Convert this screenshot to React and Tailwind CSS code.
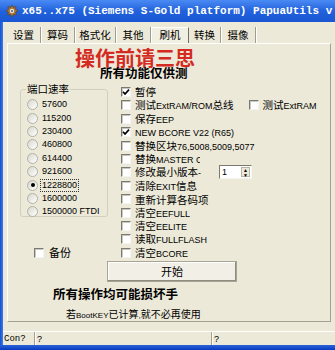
import React from "react";

const CJK_RE = /([\u2E80-\u9FFF\uFF00-\uFFEF]+)/;

// splits a label into CJK / latin runs so each gets its own size
const Mixed = ({ text, cjk = "text-[10.5px]", lat = "text-[9px]" }) =>
  text
    .split(CJK_RE)
    .filter(Boolean)
    .map((p, i) =>
      CJK_RE.test(p) ? (
        <span key={i} className={cjk}>
          {p}
        </span>
      ) : (
        <span key={i} className={lat}>
          {p}
        </span>
      )
    );

const Check = ({ on }) => (
  <span className="w-[10px] h-[10px] shrink-0 bg-white border border-t-[#7A7A72] border-l-[#7A7A72] border-r-[#F4F4F0] border-b-[#F4F4F0] shadow-[inset_1px_1px_0_#C8C8C0] flex items-center justify-center">
    {on && (
      <svg width="8" height="8" viewBox="0 0 8 8">
        <path d="M1 3.8 L3 6 L7 1.6" stroke="#000" strokeWidth="1.7" fill="none" />
      </svg>
    )}
  </span>
);

const Radio = ({ on }) => (
  <span className="w-[11px] h-[11px] shrink-0 rounded-full border border-[#B2B2A8] bg-linear-to-br from-[#D8D8CE] to-white flex items-center justify-center">
    {on && <span className="w-[4px] h-[4px] rounded-full bg-black" />}
  </span>
);

const rates = ["57600", "115200", "230400", "460800", "614400", "921600", "1228800", "1600000", "1500000 FTDI"];

const options = [
  { label: "暂停", on: true },
  { label: "测试ExtRAM/ROM总线", extra: "测试ExtRAM" },
  { label: "保存EEP" },
  { label: "NEW BCORE V22 (R65)", on: true },
  { label: "替换区块76,5008,5009,5077" },
  { label: "替换MASTER CCP", clip: true },
  { label: "修改最小版本-", spin: true },
  { label: "清除EXIT信息" },
  { label: "重新计算各码项" },
  { label: "清空EEFULL" },
  { label: "清空EELITE" },
  { label: "读取FULLFLASH" },
  { label: "清空BCORE" },
];

const tabs = [
  { label: "设置", w: "w-[34px]" },
  { label: "算码", w: "w-[34px]" },
  { label: "格式化", w: "w-[41px]" },
  { label: "其他", w: "w-[35px]" },
  { label: "刷机", w: "w-[38px]", active: true },
  { label: "转换", w: "w-[32px]" },
  { label: "摄像", w: "w-[35px]" },
];

export default function App() {
  return (
    <div className="w-[335px] h-[350px] overflow-hidden bg-[#ECE9D8] flex flex-col font-['Liberation_Sans','Noto_Sans_CJK_SC',sans-serif] text-black">
      {/* Title bar */}
      <div className="h-[22px] shrink-0 flex items-center pl-[5px] bg-linear-to-b from-[#4A8AF4] via-[#2162DC] to-[#1A56D2] overflow-hidden whitespace-nowrap">
        <svg width="14" height="14" viewBox="0 0 14 14" className="shrink-0">
          <path
            d="M7 1 L8.3 3.4 L11 2.6 L10.4 5.3 L13 6.6 L10.6 8.2 L11.4 11 L8.6 10.4 L7 13 L5.6 10.4 L2.7 11 L3.4 8.2 L1 6.8 L3.5 5.3 L3 2.6 L5.7 3.4 Z"
            fill="#A7763A"
            stroke="#5A3B15"
            strokeWidth="0.6"
          />
          <circle cx="7" cy="7" r="2.2" fill="#F3E7C8" />
          <circle cx="7" cy="7" r="1" fill="#3B5FA8" />
        </svg>
        <span className="ml-[3px] text-white font-bold text-[11px] font-['Liberation_Mono',monospace] leading-none">
          x65..x75 (Siemens S-Gold platform) PapuaUtils v
        </span>
      </div>

      <div className="flex-1 flex">
        {/* left window frame */}
        <div className="w-[3px] bg-linear-to-r from-[#1450D2] to-[#3C7BEA]" />

        <div className="flex-1 flex flex-col">
          {/* Tabs */}
          <div className="mt-[5px] h-[16px] pl-[4px] flex items-stretch">
            {tabs.map((t) => (
              <div
                key={t.label}
                className={
                  t.active
                    ? `${t.w} flex items-start justify-center pt-[1px] border-t border-l border-white border-r border-r-[#716F64] bg-[#F1EFE2] text-[10.5px] leading-[12px]`
                    : `${t.w} flex items-center justify-center border-r border-r-[#9D9D92] shadow-[1px_0_0_#FFFFFF] text-[10.5px] leading-[12px]`
                }
              >
                {t.label}
              </div>
            ))}
          </div>

          {/* Panel */}
          <div className="ml-[4px] w-[324px] h-[279px] shrink-0 border-t border-l border-white border-r border-b border-r-[#A3A093] border-b-[#A3A093] flex flex-col">
            <div className="mt-[5px] h-[20px] pl-[67px] text-[20px] leading-[20px] font-bold text-[#D42A22] whitespace-nowrap">
              操作前请三思
            </div>
            <div className="h-[11px] pl-[92px] text-[12.5px] leading-[11px] font-bold whitespace-nowrap">
              所有功能仅供测
            </div>

            <div className="h-[180px] flex">
              {/* Left column */}
              <div className="ml-[12px] w-[88px] flex flex-col">
                <div className="mt-[9px] h-[128px] relative border border-[#D0D0BF] rounded-[3px] pt-[8px] pl-[6px]">
                  <span className="absolute left-[5px] top-[-7px] px-[1px] bg-[#ECE9D8] text-[10.5px] leading-[12px]">
                    端口速率
                  </span>
                  {rates.map((r) => (
                    <div key={r} className="h-[13.4px] flex items-center">
                      <Radio on={r === "1228800"} />
                      <span
                        className={
                          r === "1228800"
                            ? "ml-[3px] px-[1px] text-[9px] leading-[11px] outline outline-1 outline-dotted outline-[#333]"
                            : "ml-[4px] text-[9px] leading-[11px]"
                        }
                      >
                        {r}
                      </span>
                    </div>
                  ))}
                </div>
                <div className="mt-[29px] ml-[14px] h-[13.4px] flex items-center">
                  <Check />
                  <span className="ml-[5px] text-[11px] leading-[12px]">备份</span>
                </div>
              </div>

              {/* Right column */}
              <div className="ml-[13px] pt-[5.3px] flex flex-col">
                {options.map((o) => (
                  <div key={o.label} className="h-[13.4px] flex items-center whitespace-nowrap">
                    <Check on={o.on} />
                    <span
                      className={
                        o.clip
                          ? "ml-[4px] w-[65px] overflow-hidden leading-[12px]"
                          : "ml-[4px] leading-[12px]"
                      }
                    >
                      <Mixed text={o.label} />
                    </span>
                    {o.extra && (
                      <>
                        <span className="ml-[15px]">
                          <Check />
                        </span>
                        <span className="ml-[4px] leading-[12px]">
                          <Mixed text={o.extra} />
                        </span>
                      </>
                    )}
                    {o.spin && (
                      <div className="ml-[18px] w-[33px] h-[14px] bg-white border border-t-[#7A7A72] border-l-[#7A7A72] border-r-[#F4F4F0] border-b-[#F4F4F0] flex">
                        <span className="flex-1 pl-[2px] text-[9px] leading-[12px]">1</span>
                        <div className="w-[9px] my-[1px] mr-[1px] flex flex-col bg-[#ECE9D8] border border-[#B8B5A6]">
                          <div className="flex-1 flex items-center justify-center text-[5px] leading-none">▲</div>
                          <div className="flex-1 flex items-center justify-center text-[5px] leading-none">▼</div>
                        </div>
                      </div>
                    )}
                  </div>
                ))}
              </div>
            </div>

            {/* Start button */}
            <button className="mt-[1px] ml-[99px] w-[130px] h-[21px] bg-[#F1EFE6] border border-[#A7A596] shadow-[inset_-1px_-1px_0_#8E8C7E,inset_1px_1px_0_#FFFFFF] text-[11px] leading-[12px]">
              开始
            </button>

            <div className="mt-[6px] h-[14px] pl-[45px] text-[12.5px] leading-[14px] font-bold whitespace-nowrap">
              所有操作均可能损坏手
            </div>
            <div className="mt-[5px] h-[12px] pl-[58px] leading-[12px] whitespace-nowrap">
              <Mixed text="若BootKEY已计算,就不必再使用" cjk="text-[10px]" lat="text-[8px]" />
            </div>
          </div>

          {/* Status bar */}
          <div className="mt-[9px] h-[14px] border-t border-white flex items-stretch text-[9px] leading-[12px]">
            <div className="w-[30px] pl-[1px] flex items-center font-['Liberation_Mono',monospace]">Con?</div>
            <div className="w-[174px] ml-[1px] pl-[2px] flex items-center border-l border-[#A3A093] shadow-[inset_1px_0_0_#FFFFFF]">
              ?
            </div>
            <div className="flex-1 ml-[3px] pl-[2px] flex items-center border-l border-[#A3A093] shadow-[inset_1px_0_0_#FFFFFF]">
              ?
            </div>
          </div>
        </div>
      </div>

      {/* bottom frame */}
      <div className="h-[5px] shrink-0 bg-linear-to-b from-[#2A63D8] to-[#0A3AC0]" />
    </div>
  );
}
